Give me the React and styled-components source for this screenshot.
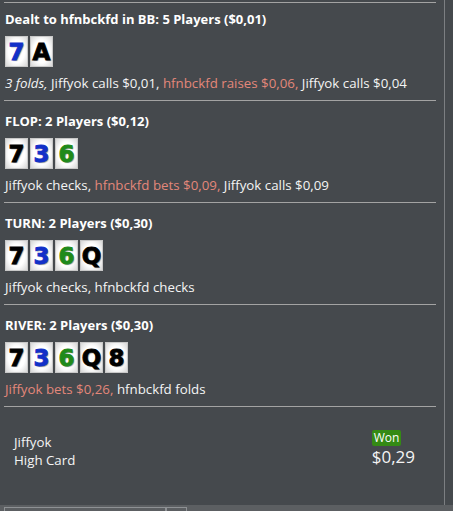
import React from "react";
import styled, { createGlobalStyle } from "styled-components";

const GlobalStyle = createGlobalStyle`
  html, body {
    margin: 0;
    padding: 0;
    background: #45494d;
  }
  body {
    font-family: "Open Sans", "Noto Sans", sans-serif;
    color: #f4f4f4;
  }
`;

const streets = [
  {
    title: "Dealt to hfnbckfd in BB: 5 Players ($0,01)",
    cards: [
      { rank: "7", color: "blue" },
      { rank: "A", color: "black" },
    ],
    actions: [
      { text: "3 folds", italic: true },
      { text: "Jiffyok calls $0,01" },
      { text: "hfnbckfd raises $0,06", hero: true },
      { text: "Jiffyok calls $0,04" },
    ],
  },
  {
    title: "FLOP: 2 Players ($0,12)",
    cards: [
      { rank: "7", color: "black" },
      { rank: "3", color: "blue" },
      { rank: "6", color: "green" },
    ],
    actions: [
      { text: "Jiffyok checks" },
      { text: "hfnbckfd bets $0,09", hero: true },
      { text: "Jiffyok calls $0,09" },
    ],
  },
  {
    title: "TURN: 2 Players ($0,30)",
    cards: [
      { rank: "7", color: "black" },
      { rank: "3", color: "blue" },
      { rank: "6", color: "green" },
      { rank: "Q", color: "black" },
    ],
    actions: [{ text: "Jiffyok checks" }, { text: "hfnbckfd checks" }],
  },
  {
    title: "RIVER: 2 Players ($0,30)",
    cards: [
      { rank: "7", color: "black" },
      { rank: "3", color: "blue" },
      { rank: "6", color: "green" },
      { rank: "Q", color: "black" },
      { rank: "8", color: "black" },
    ],
    actions: [
      { text: "Jiffyok bets $0,26", hero: true },
      { text: "hfnbckfd folds" },
    ],
  },
];

const suitColors = {
  black: "#000000",
  blue: "#1230c8",
  green: "#1f8a1a",
};

function App() {
  return (
    <>
      <GlobalStyle />
      <Window>
        <Body>
          <History>
            {streets.map((street, i) => (
              <Street key={i} $first={i === 0}>
                <StreetTitle>{street.title}</StreetTitle>
                <Cards>
                  {street.cards.map((card, j) => (
                    <Card key={j} $color={suitColors[card.color]}>
                      {card.rank}
                    </Card>
                  ))}
                </Cards>
                <Actions>
                  {street.actions.map((a, j) => (
                    <Action key={j} $hero={a.hero} $italic={a.italic}>
                      {a.text}
                      {j < street.actions.length - 1 ? ", " : ""}
                    </Action>
                  ))}
                </Actions>
              </Street>
            ))}
            <Summary>
              <Winner>
                <div>Jiffyok</div>
                <div>High Card</div>
              </Winner>
              <Result>
                <WonBadge>Won</WonBadge>
                <Amount>$0,29</Amount>
              </Result>
            </Summary>
          </History>
          <Divider />
        </Body>
        <StatusBar>
          <StatusCell $w={160} />
          <StatusCell $w={19} />
        </StatusBar>
      </Window>
    </>
  );
}

export default App;

const Window = styled.div`
  width: 453px;
  height: 511px;
  display: flex;
  flex-direction: column;
  overflow: hidden;
`;

const Body = styled.div`
  flex: 1;
  display: flex;
  min-height: 0;
`;

const History = styled.div`
  width: 432px;
  padding-left: 4px;
  display: flex;
  flex-direction: column;
`;

const Divider = styled.div`
  width: 1px;
  margin-left: 8px;
  background: #7c7f82;
`;

const Street = styled.div`
  border-top: 1px solid #a3a3a3;
  margin-top: ${(p) => (p.$first ? "2px" : "0")};
  padding: ${(p) => (p.$first ? "7px" : "11px")} 0 8px 1px;
  display: flex;
  flex-direction: column;
`;

const StreetTitle = styled.div`
  font-size: 13px;
  font-weight: 700;
  line-height: 18px;
  color: #ffffff;
`;

const Cards = styled.div`
  display: flex;
  gap: 2px;
  margin: 8px 0 7px;
`;

const Card = styled.div`
  width: 23px;
  height: 31px;
  box-sizing: border-box;
  background: radial-gradient(ellipse at center, #ffffff 55%, #d6d6d6 100%);
  border: 1px solid #c8c8c8;
  display: flex;
  align-items: center;
  justify-content: center;
  font-family: "DejaVu Sans", sans-serif;
  font-weight: 700;
  font-size: 23px;
  color: ${(p) => p.$color};
  -webkit-text-stroke: 0.9px ${(p) => p.$color};
  text-shadow: 1px 1px 1px rgba(0, 0, 0, 0.4);
`;

const Actions = styled.div`
  font-size: 13.3px;
  line-height: 18px;
`;

const Action = styled.span`
  color: ${(p) => (p.$hero ? "#e3877a" : "#f4f4f4")};
  font-style: ${(p) => (p.$italic ? "italic" : "normal")};
`;

const Summary = styled.div`
  border-top: 1px solid #a3a3a3;
  display: flex;
  justify-content: space-between;
  padding: 23px 21px 0 10px;
  height: 96px;
  box-sizing: border-box;
`;

const Winner = styled.div`
  font-size: 13.3px;
  line-height: 18px;
  padding-top: 3px;
`;

const Result = styled.div`
  display: flex;
  flex-direction: column;
  align-items: flex-start;
`;

const WonBadge = styled.span`
  background: #348a14;
  color: #ffffff;
  font-size: 12px;
  line-height: 16px;
  padding: 0 2px;
  border-radius: 2px;
`;

const Amount = styled.div`
  font-size: 17px;
  line-height: 22px;
`;

const StatusBar = styled.div`
  height: 6px;
  background: #5c5f62;
  display: flex;
  padding: 2px 0 0 4px;
  box-sizing: border-box;
`;

const StatusCell = styled.div`
  width: ${(p) => p.$w}px;
  border: 1px solid #8e9194;
  border-bottom: none;
`;
